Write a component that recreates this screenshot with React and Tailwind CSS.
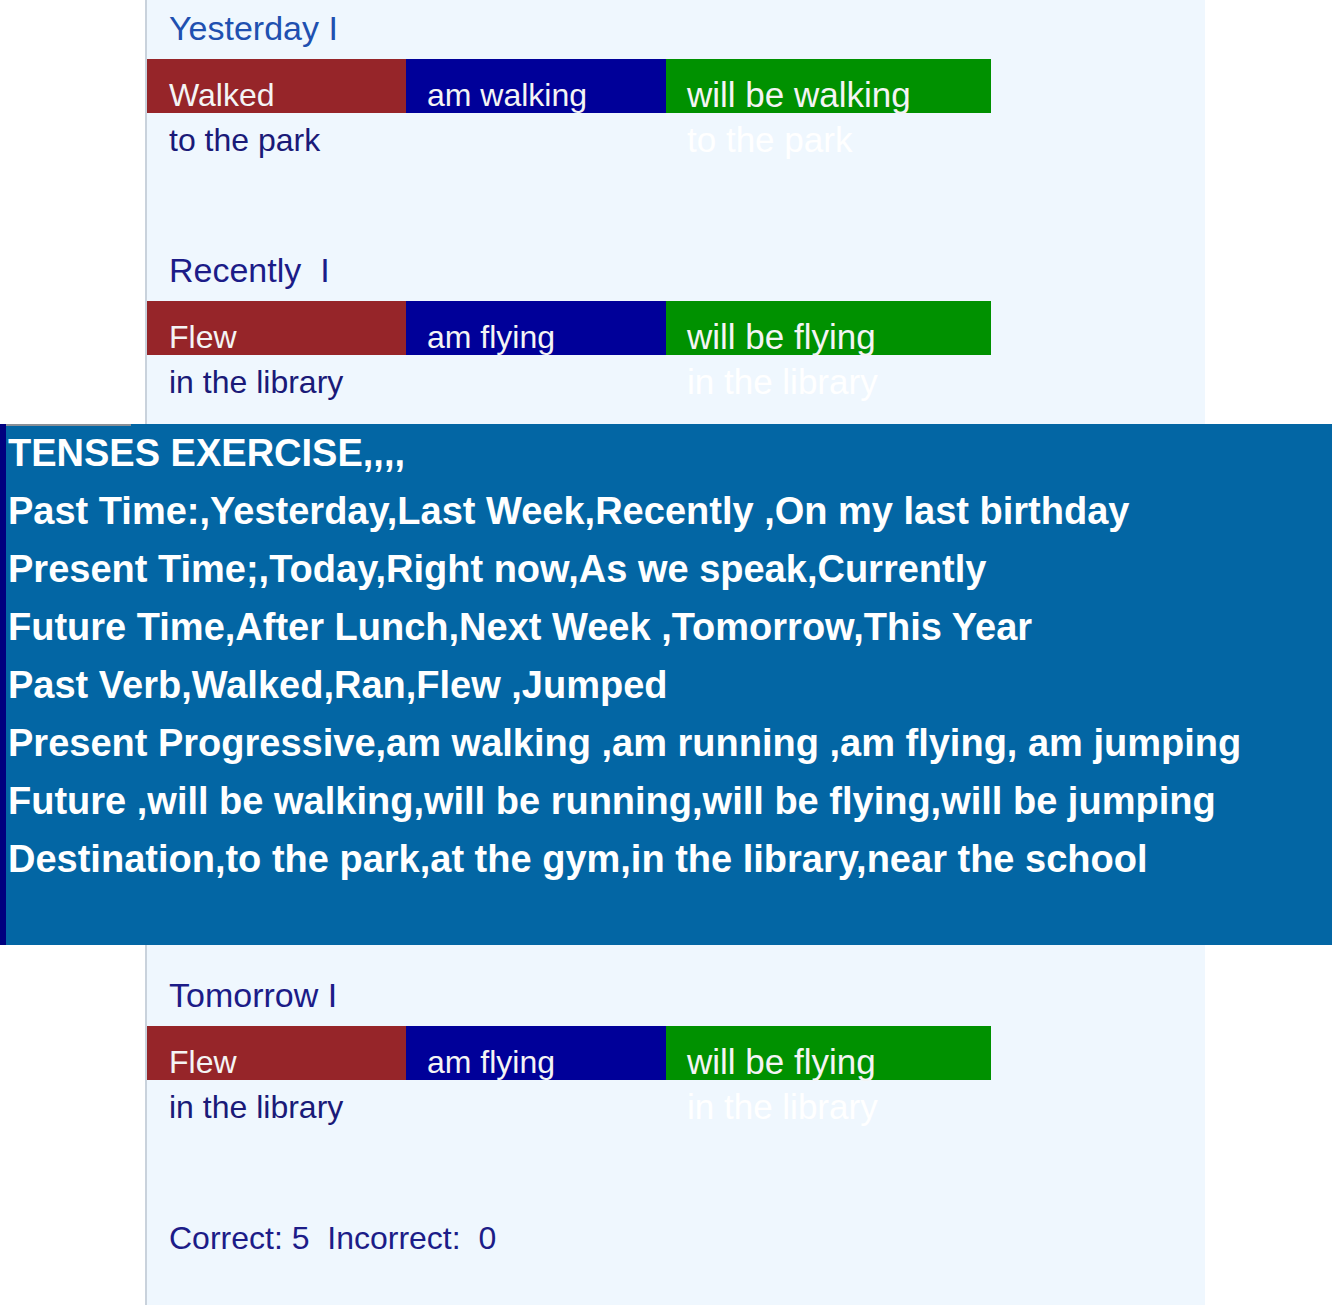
import React from 'react';

const rows = [
  { heading: 'Yesterday I', headColor: 'text-[#2050b0]', past: 'Walked', present: 'am walking', future: 'will be walking', dest: 'to the park' },
  { heading: 'Recently  I', headColor: 'text-[#1c1c88]', past: 'Flew', present: 'am flying', future: 'will be flying', dest: 'in the library' },
];

const lines = [
  'TENSES EXERCISE,,,,',
  'Past Time:,Yesterday,Last Week,Recently ,On my last birthday',
  'Present Time;,Today,Right now,As we speak,Currently',
  'Future Time,After Lunch,Next Week ,Tomorrow,This Year',
  'Past Verb,Walked,Ran,Flew ,Jumped',
  'Present Progressive,am walking ,am running ,am flying, am jumping',
  'Future ,will be walking,will be running,will be flying,will be jumping',
  'Destination,to the park,at the gym,in the library,near the school',
];

const Block = ({ row, className = '' }) => (
  <div className={className}>
    <div className={`pl-[22px] text-[34px] leading-[56px] mb-[3px] whitespace-pre ${row.headColor}`}>{row.heading}</div>
    <div className="flex h-[54px] text-[#f4f4f4]">
      <div className="w-[259px] bg-[#962529] pl-[22px] pt-[18px] leading-[36px]">{row.past}</div>
      <div className="w-[260px] bg-[#000099] pl-[21px] pt-[18px] leading-[36px]">{row.present}</div>
      <div className="w-[325px] bg-[#009100] pl-[21px] pt-[18px] leading-[36px] text-[35px]">{row.future}</div>
    </div>
    <div className="flex leading-[54px]">
      <div className="w-[519px] pl-[22px] text-[#1a1a78]">{row.dest}</div>
      <div className="pl-[21px] text-white text-[35px]">{row.dest}</div>
    </div>
  </div>
);

export default function App() {
  return (
    <div className="w-[1332px] h-[1305px] bg-white overflow-hidden text-[32px] font-['Liberation_Sans',Arial,sans-serif]">
      <div className="ml-[145px] w-[1060px] h-[424px] bg-[#eff7fe] border-l-2 border-[#c9d2dc]">
        <Block row={rows[0]} />
        <Block row={rows[1]} className="mt-[75px]" />
      </div>

      <div className="h-[521px] bg-[#0366a4] border-l-[6px] border-[#00007f] text-white font-bold text-[38px] leading-[58px]">
        <div className="h-[2px] w-[125px] bg-[#8a8f96]" />
        <div className="pl-[2px] -mt-[2px]">
          {lines.map((l) => (
            <div key={l} className="whitespace-pre">{l}</div>
          ))}
        </div>
      </div>

      <div className="ml-[145px] w-[1060px] h-[360px] bg-[#eff7fe] border-l-2 border-[#c9d2dc] pt-[22px]">
        <Block row={{ heading: 'Tomorrow I', headColor: 'text-[#1c1c88]', past: 'Flew', present: 'am flying', future: 'will be flying', dest: 'in the library' }} />
        <div className="mt-[77px] pl-[22px] leading-[54px] text-[#1c1c88] whitespace-pre">Correct: 5  Incorrect:  0</div>
      </div>
    </div>
  );
}
